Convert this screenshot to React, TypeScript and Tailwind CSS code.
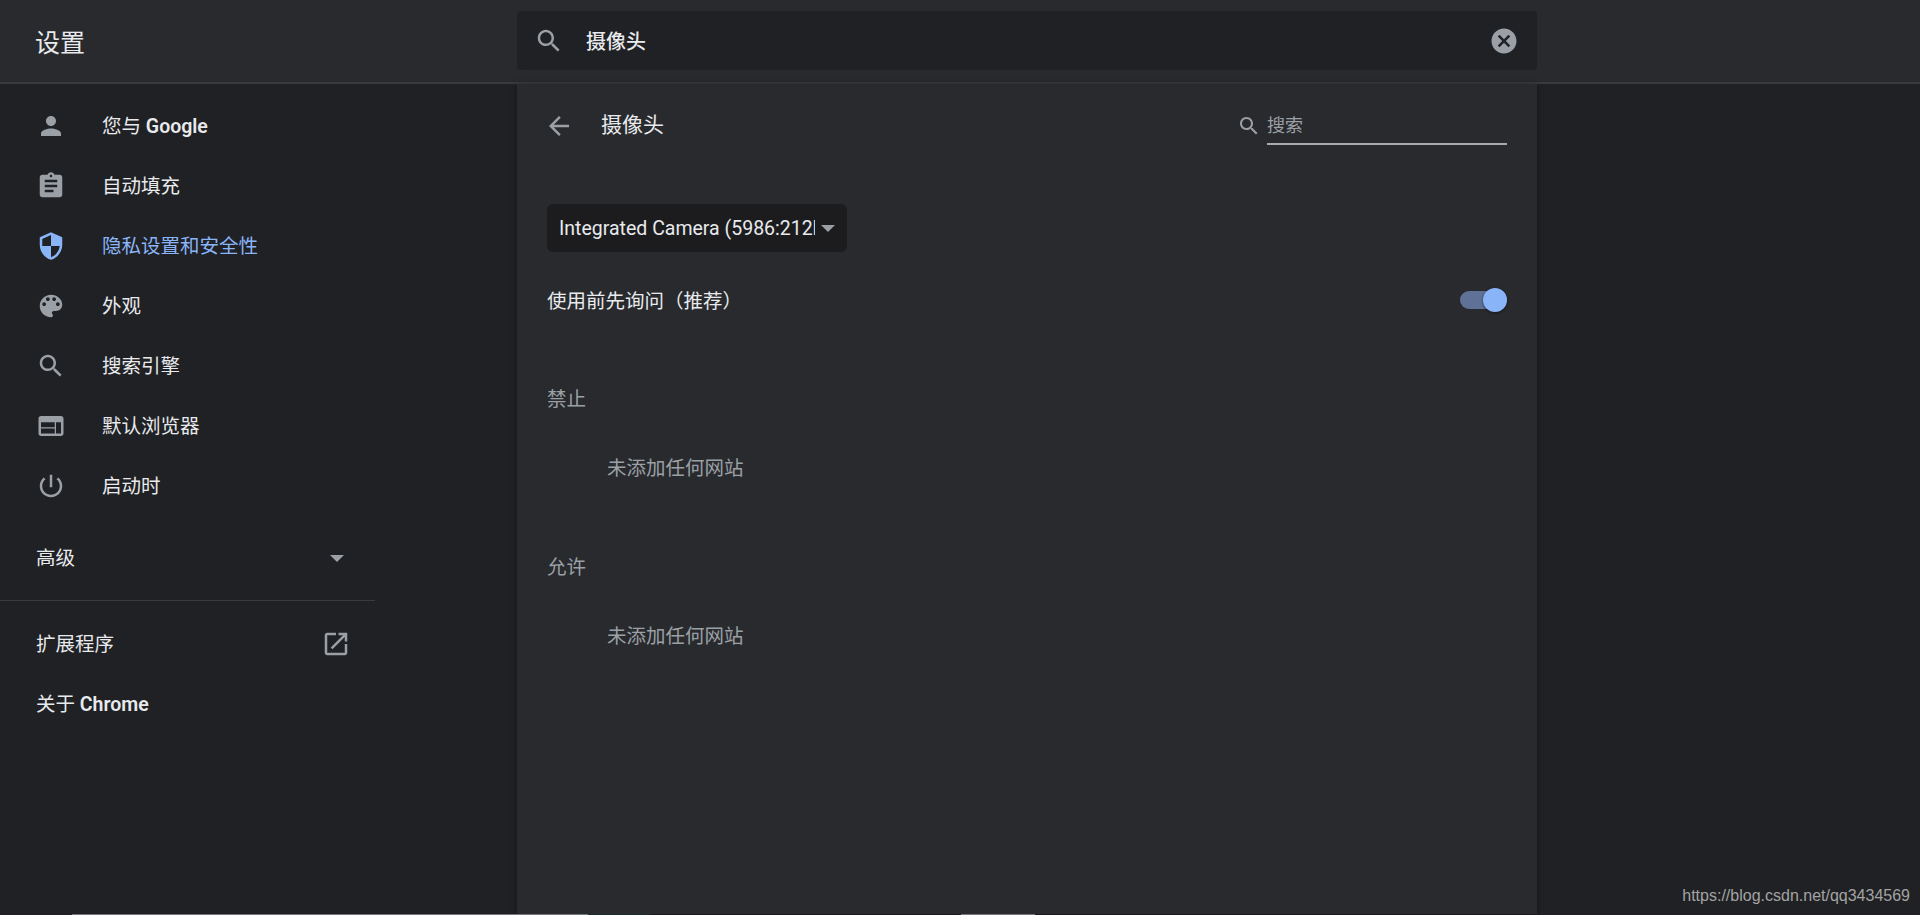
import React from 'react';

const font = 'font-[Roboto,"Noto_Sans_CJK_SC",sans-serif]';

const paths = {
  person: 'M12 12c2.21 0 4-1.79 4-4s-1.79-4-4-4-4 1.79-4 4 1.79 4 4 4zm0 2c-2.67 0-8 1.34-8 4v2h16v-2c0-2.66-5.33-4-8-4z',
  assignment: 'M19 3h-4.18C14.4 1.84 13.3 1 12 1c-1.3 0-2.4.84-2.82 2H5c-1.1 0-2 .9-2 2v14c0 1.1.9 2 2 2h14c1.1 0 2-.9 2-2V5c0-1.1-.9-2-2-2zm-7 0c.55 0 1 .45 1 1s-.45 1-1 1-1-.45-1-1 .45-1 1-1zm2 14H7v-2h7v2zm3-4H7v-2h10v2zm0-4H7V7h10v2z',
  security: 'M12 1L3 5v6c0 5.55 3.84 10.74 9 12 5.16-1.26 9-6.45 9-12V5l-9-4zm0 10.99h7c-.53 4.12-3.28 7.79-7 8.94V12H5V6.3l7-3.11v8.8z',
  palette: 'M12 3c-4.97 0-9 4.03-9 9s4.03 9 9 9c.83 0 1.5-.67 1.5-1.5 0-.39-.15-.74-.39-1.01-.23-.26-.38-.61-.38-.99 0-.83.67-1.5 1.5-1.5H16c2.76 0 5-2.24 5-5 0-4.42-4.03-8-9-8zm-5.5 9c-.83 0-1.5-.67-1.5-1.5S5.67 9 6.5 9 8 9.67 8 10.5 7.33 12 6.5 12zm3-4C8.67 8 8 7.33 8 6.5S8.67 5 9.5 5s1.5.67 1.5 1.5S10.33 8 9.5 8zm5 0c-.83 0-1.5-.67-1.5-1.5S13.67 5 14.5 5s1.5.67 1.5 1.5S15.33 8 14.5 8zm3 4c-.83 0-1.5-.67-1.5-1.5S16.67 9 17.5 9s1.5.67 1.5 1.5-.67 1.5-1.5 1.5z',
  search: 'M15.5 14h-.79l-.28-.27C15.41 12.59 16 11.11 16 9.5 16 5.91 13.09 3 9.5 3S3 5.91 3 9.5 5.91 16 9.5 16c1.61 0 3.09-.59 4.23-1.57l.27.28v.79l5 4.99L20.49 19l-4.99-5zm-6 0C7.01 14 5 11.99 5 9.5S7.01 5 9.5 5 14 7.01 14 9.5 11.99 14 9.5 14z',
  web: 'M20 4H4c-1.1 0-1.99.9-1.99 2L2 18c0 1.1.9 2 2 2h16c1.1 0 2-.9 2-2V6c0-1.1-.9-2-2-2zm-5 14H4v-4h11v4zm0-5H4V9h11v4zm5 5h-4V9h4v9z',
  power: 'M13 3h-2v10h2V3zm4.83 2.17l-1.42 1.42C17.99 7.86 19 9.81 19 12c0 3.87-3.13 7-7 7s-7-3.13-7-7c0-2.19 1.01-4.14 2.58-5.42L6.17 5.17C4.23 6.82 3 9.26 3 12c0 4.97 4.03 9 9 9s9-4.03 9-9c0-2.74-1.23-5.18-3.17-6.83z',
  openNew: 'M19 19H5V5h7V3H5c-1.11 0-2 .9-2 2v14c0 1.1.89 2 2 2h14c1.1 0 2-.9 2-2v-7h-2v7zM14 3v2h3.59l-9.83 9.83 1.41 1.41L19 6.41V10h2V3h-7z',
  back: 'M20 11H7.83l5.59-5.59L12 4l-8 8 8 8 1.41-1.41L7.83 13H20v-2z',
  cancel: 'M12 2C6.47 2 2 6.47 2 12s4.47 10 10 10 10-4.47 10-10S17.53 2 12 2zm5 13.59L15.59 17 12 13.41 8.41 17 7 15.59 10.59 12 7 8.41 8.41 7 12 10.59 15.59 7 17 8.41 13.41 12 17 15.59z',
};

const Icon = ({ d, className }: { d: string; className: string }) => (
  <svg viewBox="0 0 24 24" fill="currentColor" className={className}>
    <path d={d} />
  </svg>
);

const Caret = () => (
  <svg viewBox="0 0 14 7" fill="#9aa0a6" className="w-[14px] h-[7px]">
    <path d="M0 0h14L7 7z" />
  </svg>
);

const navItems = [
  { icon: paths.person, label: <>您与 <span className="font-semibold">Google</span></> },
  { icon: paths.assignment, label: '自动填充' },
  { icon: paths.security, label: '隐私设置和安全性', active: true },
  { icon: paths.palette, label: '外观' },
  { icon: paths.search, label: '搜索引擎' },
  { icon: paths.web, label: '默认浏览器' },
  { icon: paths.power, label: '启动时' },
];

const App: React.FC = () => {
  return (
    <div className={`${font} relative w-full h-[915px] overflow-hidden flex flex-col bg-[#202124] text-[#e8eaed] text-[19.5px]`}>
      <header className="h-[84px] shrink-0 flex bg-[#292a2d] border-b-2 border-[#3a3b3e]">
        <div className="w-[517px] pl-[35px] flex items-center text-[25px] pt-[5px]">设置</div>
        <div className="w-[1020px] h-[59px] mt-[11px] flex items-center bg-[#202124] rounded-[4px] pl-[17px] pr-[18px]">
          <Icon d={paths.search} className="w-[30px] h-[30px] text-[#9aa0a6]" />
          <span className="ml-[22px] flex-1 font-medium text-[20px] pt-[2px]">摄像头</span>
          <Icon d={paths.cancel} className="w-[30px] h-[30px] text-[#9aa0a6]" />
        </div>
      </header>

      <div className="flex flex-1 min-h-0">
        <nav className="w-[375px] shrink-0 pt-3">
          {navItems.map((item, i) => (
            <div key={i} className={`h-[60px] flex items-center pl-[36px] ${item.active ? 'text-[#8ab4f8]' : ''}`}>
              <Icon d={item.icon} className={`w-[30px] h-[30px] ${item.active ? 'text-[#8ab4f8]' : 'text-[#9aa0a6]'}`} />
              <span className="ml-[36px] pt-[2px]">{item.label}</span>
            </div>
          ))}
          <div className="mt-3 h-[60px] flex items-center justify-between pl-9 pr-[31px]">
            <span className="pt-[2px]">高级</span>
            <Caret />
          </div>
          <div className="mt-3 mb-[13px] border-t border-[#3a3b3e]" />
          <div className="h-[60px] flex items-center justify-between pl-9 pr-[24px]">
            <span className="pt-[2px]">扩展程序</span>
            <Icon d={paths.openNew} className="w-[30px] h-[30px] text-[#9aa0a6]" />
          </div>
          <div className="h-[60px] flex items-center pl-9 pt-[2px]">
            关于&nbsp;<span className="font-semibold">Chrome</span>
          </div>
        </nav>

        <div className="w-[142px] shrink-0" />

        <main className="w-[1020px] shrink-0 bg-[#292a2d] shadow-[0_0_6px_rgba(0,0,0,0.35)] pt-3 px-[30px]">
          <div className="h-[60px] flex items-center">
            <Icon d={paths.back} className="w-[30px] h-[30px] -ml-[3px] text-[#9aa0a6]" />
            <span className="ml-[27px] text-[21px] flex-1">摄像头</span>
            <Icon d={paths.search} className="w-[24px] h-[24px] text-[#9aa0a6]" />
            <div className="ml-[6px] w-[240px] h-[38px] flex items-center text-[18px] text-[#9aa0a6] border-b-2 border-[#a9aaab]">搜索</div>
          </div>

          <div className="mt-12 w-[300px] h-[48px] flex items-center bg-[#1c1c1e] rounded-[6px] pl-3">
            <span className="w-[256px] overflow-hidden whitespace-nowrap pt-[2px]">Integrated Camera (5986:212b)</span>
            <span className="ml-[6px] flex"><Caret /></span>
          </div>

          <div className="mt-3 h-[72px] flex items-center justify-between">
            <span className="pt-[4px]">使用前先询问（推荐）</span>
            <div className="relative w-[47px] h-[18px] rounded-full bg-[#5f7196]">
              <div className="absolute right-0 -top-[3px] w-[24px] h-[24px] rounded-full bg-[#8ab4f8] shadow-[0_1px_3px_rgba(0,0,0,0.5)]" />
            </div>
          </div>

          <div className="mt-[46px] h-[36px] flex items-center text-[#9aa0a6]">禁止</div>
          <div className="mt-[27px] h-[48px] pl-[60px] flex items-center text-[#9aa0a6]">未添加任何网站</div>
          <div className="mt-[57px] h-[36px] flex items-center text-[#9aa0a6]">允许</div>
          <div className="mt-[27px] h-[48px] pl-[60px] flex items-center text-[#9aa0a6]">未添加任何网站</div>
        </main>
      </div>

      <div className="h-px shrink-0 flex">
        <div className="w-[72px]" />
        <div className="w-[516px] bg-[#77787a]" />
        <div className="w-[62px] bg-[#1a2c36]" />
        <div className="w-[311px]" />
        <div className="w-[74px] bg-[#77787a]" />
      </div>

      <div className="absolute right-[10px] bottom-[9px] font-['Liberation_Sans',sans-serif] text-[16px] leading-5 text-[#a3a3a3]">
        https://blog.csdn.net/qq3434569
      </div>
    </div>
  );
};

export default App;
